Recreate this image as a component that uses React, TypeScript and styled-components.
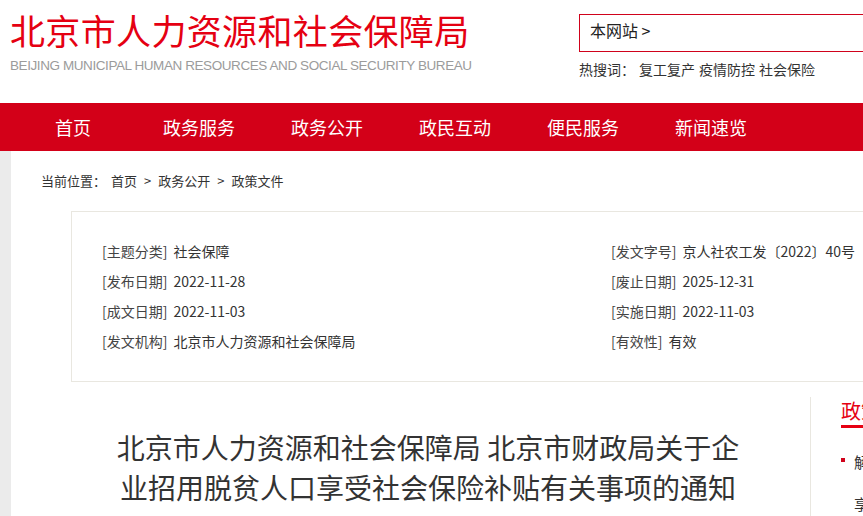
import React from "react";
import styled, { createGlobalStyle } from "styled-components";

const Global = createGlobalStyle`
  html, body { margin: 0; padding: 0; overflow: hidden; background: #fff; }
  body { font-family: "Noto Sans CJK SC", "Noto Sans", sans-serif; color: #333; }
  * { box-sizing: border-box; }
`;

const Page = styled.div`
  width: 1280px;
`;

const Header = styled.header`
  height: 103px;
  display: flex;
  padding-left: 10px;
  background: #fff;
`;

const Logo = styled.div`
  width: 569px;
  padding-top: 12px;
`;

const LogoCn = styled.div`
  font-size: 35px;
  line-height: 36px;
  color: #e50012;
  letter-spacing: 0.35px;
  white-space: nowrap;
`;

const LogoEn = styled.div`
  margin-top: 10px;
  font-family: "Liberation Sans", Arial, sans-serif;
  font-size: 13.5px;
  line-height: 16px;
  color: #9b9b9b;
  letter-spacing: -0.42px;
  white-space: nowrap;
`;

const SearchArea = styled.div`
  padding-top: 14px;
  width: 420px;
`;

const SearchBox = styled.div`
  height: 38px;
  border: 1px solid #d0021b;
  padding: 5px 0 0 10px;
  font-size: 16px;
  line-height: 20px;
  color: #222;
`;

const HotRow = styled.div`
  margin-top: 7px;
  display: flex;
  font-size: 14px;
  line-height: 20px;
  color: #333;
`;

const HotLabel = styled.span`
  margin-right: 4px;
`;

const HotWord = styled.span`
  margin-right: 4px;
`;

const Nav = styled.nav`
  height: 48px;
  background: #d30018;
  display: flex;
  align-items: center;
  padding-left: 55px;
`;

const NavItem = styled.div<{ $w: number }>`
  width: ${(p) => p.$w}px;
  color: #fff;
  font-size: 18px;
  line-height: 48px;
  white-space: nowrap;
`;

const Body = styled.div`
  background: #ebebeb;
  padding-left: 11px;
`;

const Content = styled.div`
  background: #fff;
  min-height: 400px;
`;

const Crumb = styled.div`
  padding: 20px 0 0 30px;
  font-size: 13px;
  line-height: 20px;
  color: #333;
  display: flex;
`;

const CrumbLead = styled.span`
  margin-right: 5px;
`;

const CrumbSep = styled.span`
  margin: 0 7px;
`;

const InfoBox = styled.div`
  margin: 20px 0 0 60px;
  border: 1px solid #e9e7e0;
  padding: 24px 0 25px 30px;
  display: grid;
  grid-template-columns: 509px 1fr;
  width: 1160px;
`;

const InfoRow = styled.div`
  font-size: 14px;
  line-height: 30px;
  color: #333;
  white-space: nowrap;
`;

const Label = styled.span`
  color: #444;
  margin-right: 6px;
`;

const Columns = styled.div`
  display: flex;
  margin-top: 15px;
`;

const Main = styled.div`
  width: 799px;
  padding: 30px 62px 0 97px;
`;

const Title = styled.h1`
  margin: 0;
  font-size: 28px;
  line-height: 40px;
  font-weight: 400;
  color: #333;
  text-align: center;
`;

const Side = styled.aside`
  width: 380px;
  border-left: 1px solid #e9e7e0;
  padding: 0 0 0 30px;
  min-height: 130px;
`;

const SideTitle = styled.div`
  display: inline-block;
  color: #e60012;
  font-size: 20px;
  line-height: 28px;
  border-bottom: 3px solid #e60012;
`;

const SideList = styled.ul`
  list-style: none;
  margin: 13px 0 0;
  padding: 0;
`;

const SideItem = styled.li`
  position: relative;
  padding-left: 13px;
  font-size: 15px;
  line-height: 42px;
  color: #333;
  width: 300px;
  &::before {
    content: "";
    position: absolute;
    left: 0;
    top: 17px;
    width: 4px;
    height: 4px;
    background: #d0021b;
  }
`;

const SideLine = styled.div`
  padding-left: 13px;
  font-size: 15px;
  line-height: 42px;
  color: #333;
`;

const navItems: [string, number][] = [
  ["首页", 108],
  ["政务服务", 128],
  ["政务公开", 128],
  ["政民互动", 128],
  ["便民服务", 128],
  ["新闻速览", 128],
];

const crumbs = ["首页", "政务公开", "政策文件"];

const infoLeft = [
  ["[主题分类]", "社会保障"],
  ["[发布日期]", "2022-11-28"],
  ["[成文日期]", "2022-11-03"],
  ["[发文机构]", "北京市人力资源和社会保障局"],
];
const infoRight = [
  ["[发文字号]", "京人社农工发〔2022〕40号"],
  ["[废止日期]", "2025-12-31"],
  ["[实施日期]", "2022-11-03"],
  ["[有效性]", "有效"],
];

export default function App() {
  return (
    <Page>
      <Global />
      <Header>
        <Logo>
          <LogoCn>北京市人力资源和社会保障局</LogoCn>
          <LogoEn>BEIJING MUNICIPAL HUMAN RESOURCES AND SOCIAL SECURITY BUREAU</LogoEn>
        </Logo>
        <SearchArea>
          <SearchBox>本网站 &gt;</SearchBox>
          <HotRow>
            <HotLabel>热搜词：</HotLabel>
            <HotWord>复工复产</HotWord>
            <HotWord>疫情防控</HotWord>
            <HotWord>社会保险</HotWord>
          </HotRow>
        </SearchArea>
      </Header>
      <Nav>
        {navItems.map(([t, w]) => (
          <NavItem key={t} $w={w}>
            {t}
          </NavItem>
        ))}
      </Nav>
      <Body>
        <Content>
          <Crumb>
            <CrumbLead>当前位置：</CrumbLead>
            {crumbs.map((c, i) => (
              <React.Fragment key={c}>
                {i > 0 && <CrumbSep>&gt;</CrumbSep>}
                <span>{c}</span>
              </React.Fragment>
            ))}
          </Crumb>
          <InfoBox>
            {infoLeft.map((l, i) => (
              <React.Fragment key={i}>
                <InfoRow>
                  <Label>{l[0]}</Label>
                  {l[1]}
                </InfoRow>
                <InfoRow>
                  <Label>{infoRight[i][0]}</Label>
                  {infoRight[i][1]}
                </InfoRow>
              </React.Fragment>
            ))}
          </InfoBox>
          <Columns>
            <Main>
              <Title>
                北京市人力资源和社会保障局 北京市财政局关于企业招用脱贫人口享受社会保险补贴有关事项的通知
              </Title>
            </Main>
            <Side>
              <SideTitle>政策解读</SideTitle>
              <SideList>
                <SideItem>解读《关于企业招用脱贫人口</SideItem>
              </SideList>
              <SideLine>享受社会保险补贴有关事项的通知》</SideLine>
            </Side>
          </Columns>
        </Content>
      </Body>
    </Page>
  );
}
